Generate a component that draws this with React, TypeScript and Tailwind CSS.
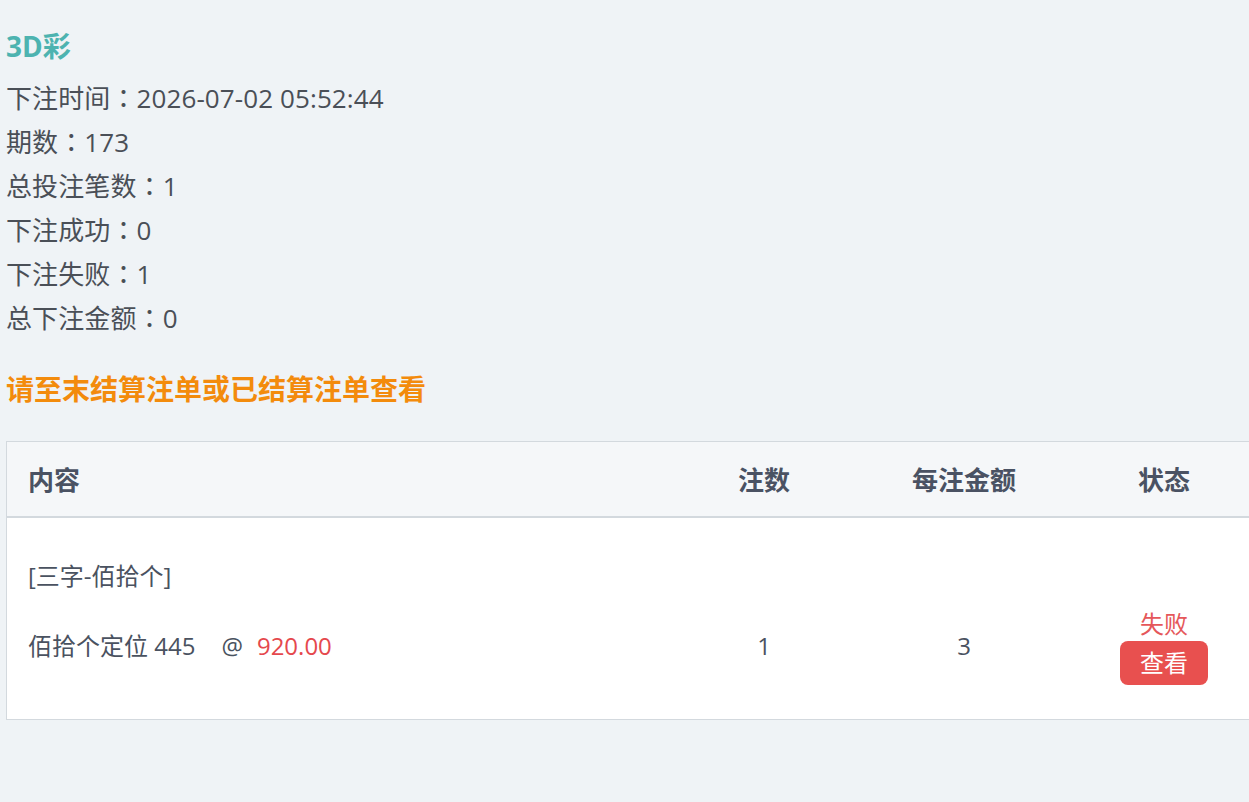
const info = [
  { label: '下注时间', value: '2026-07-02 05:52:44' },
  { label: '期数', value: '173' },
  { label: '总投注笔数', value: '1' },
  { label: '下注成功', value: '0' },
  { label: '下注失败', value: '1' },
  { label: '总下注金额', value: '0' },
]

export default function App() {
  return (
    <div
      className="min-h-[802px] w-[1249px] overflow-hidden bg-[#eff3f6] pl-[6px] pt-[26px] text-[#4a4f57]"
      style={{ fontFamily: '"Open Sans", "Noto Sans CJK SC", sans-serif' }}
    >
      <h1 className="h-[40px] text-[28px] font-bold leading-[40px] text-[#4db3b0]">3D彩</h1>

      <div className="mt-[9px] flex flex-col">
        {info.map((row) => (
          <div key={row.label} className="h-[44px] text-[26px] leading-[44px] tracking-[0.1px]">
            {row.label}
            <span className="[font-family:'Noto_Sans_CJK_TC',sans-serif]">：</span>
            {row.value}
          </div>
        ))}
      </div>

      <p className="mt-[28px] h-[44px] text-[28px] font-bold leading-[44px] text-[#f38b0c]">
        请至末结算注单或已结算注单查看
      </p>

      <div className="mt-[30px] w-[1262px] border border-[#d3d9de] bg-white">
        <div className="flex h-[76px] items-center border-b-2 border-[#d3d9de] bg-[#f5f7f9] pt-[3px] text-[26px] font-bold text-[#4a5263]">
          <div className="w-[657px] pl-[21px]">内容</div>
          <div className="w-[200px] text-center">注数</div>
          <div className="w-[200px] text-center">每注金额</div>
          <div className="w-[200px] text-center">状态</div>
        </div>

        <div className="flex h-[201px] text-[24px] text-[#4a5260]">
          <div className="flex w-[657px] flex-col pl-[21px] pt-[38px]">
            <div className="leading-[40px]">[三字-佰拾个]</div>
            <div className="mt-[30px] leading-[40px]">
              佰拾个定位 445<span className="ml-[26px]">@</span>
              <span className="ml-[14px] text-[#e5484d]">920.00</span>
            </div>
          </div>
          <div className="flex w-[200px] flex-col justify-end pb-[53px] text-center leading-[40px]">1</div>
          <div className="flex w-[200px] flex-col justify-end pb-[53px] text-center leading-[40px]">3</div>
          <div className="flex w-[200px] flex-col items-center justify-end pb-[34px]">
            <div className="leading-[34px] text-[#e5575a]">失败</div>
            <button
              type="button"
              className="h-[44px] w-[88px] rounded-[8px] bg-[#e8504f] text-[24px] leading-[44px] text-white"
            >
              查看
            </button>
          </div>
        </div>
      </div>
    </div>
  )
}
